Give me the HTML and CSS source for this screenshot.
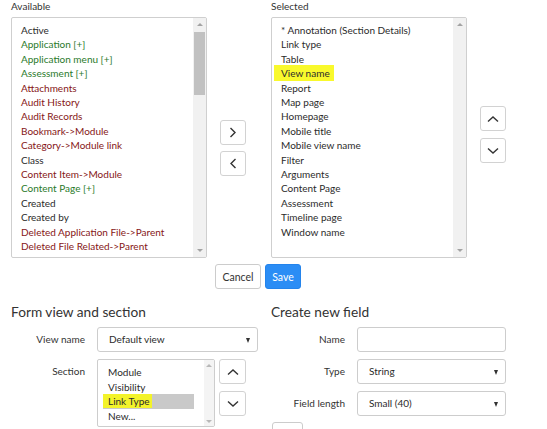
FILE: index.html
```html
<!DOCTYPE html>
<html lang="en">
<head>
<meta charset="utf-8">
<title>Form layout</title>
<link rel="stylesheet" href="styles.css">
</head>
<body>
<div class="page">
  <div class="picker">
    <div class="col">
      <div class="col-label">Available</div>
      <div class="listbox">
        <div class="list-items">
          <div class="item">Active</div>
          <div class="item ref">Application [+]</div>
          <div class="item ref">Application menu [+]</div>
          <div class="item ref">Assessment [+]</div>
          <div class="item rel">Attachments</div>
          <div class="item rel">Audit History</div>
          <div class="item rel">Audit Records</div>
          <div class="item rel">Bookmark-&gt;Module</div>
          <div class="item rel">Category-&gt;Module link</div>
          <div class="item">Class</div>
          <div class="item rel">Content Item-&gt;Module</div>
          <div class="item ref">Content Page [+]</div>
          <div class="item">Created</div>
          <div class="item">Created by</div>
          <div class="item rel">Deleted Application File-&gt;Parent</div>
          <div class="item rel">Deleted File Related-&gt;Parent</div>
        </div>
        <div class="scrollbar">
          <span class="sb-up"></span>
          <span class="sb-thumb"></span>
          <span class="sb-space"></span>
          <span class="sb-down"></span>
        </div>
      </div>
    </div>

    <div class="move-btns">
      <button class="btn-icon" aria-label="Add">
        <svg width="8" height="11" viewBox="0 0 8 11"><polyline points="1.5,1 6,5.5 1.5,10" fill="none" stroke="#333" stroke-width="1.4"/></svg>
      </button>
      <button class="btn-icon" aria-label="Remove">
        <svg width="8" height="11" viewBox="0 0 8 11"><polyline points="6.5,1 2,5.5 6.5,10" fill="none" stroke="#333" stroke-width="1.4"/></svg>
      </button>
    </div>

    <div class="col">
      <div class="col-label">Selected</div>
      <div class="listbox">
        <div class="list-items">
          <div class="item">* Annotation (Section Details)</div>
          <div class="item">Link type</div>
          <div class="item">Table</div>
          <div class="item"><span class="mark">View name</span></div>
          <div class="item">Report</div>
          <div class="item">Map page</div>
          <div class="item">Homepage</div>
          <div class="item">Mobile title</div>
          <div class="item">Mobile view name</div>
          <div class="item">Filter</div>
          <div class="item">Arguments</div>
          <div class="item">Content Page</div>
          <div class="item">Assessment</div>
          <div class="item">Timeline page</div>
          <div class="item">Window name</div>
        </div>
        <div class="scrollbar">
          <span class="sb-up"></span>
          <span class="sb-space"></span>
          <span class="sb-down"></span>
        </div>
      </div>
    </div>

    <div class="order-btns">
      <button class="btn-icon" aria-label="Move up">
        <svg width="12" height="8" viewBox="0 0 12 8"><polyline points="1,6.5 6,2 11,6.5" fill="none" stroke="#333" stroke-width="1.4"/></svg>
      </button>
      <button class="btn-icon" aria-label="Move down">
        <svg width="12" height="8" viewBox="0 0 12 8"><polyline points="1,1.5 6,6 11,1.5" fill="none" stroke="#333" stroke-width="1.4"/></svg>
      </button>
    </div>
  </div>

  <div class="actions">
    <button class="btn btn-cancel">Cancel</button>
    <button class="btn btn-save">Save</button>
  </div>

  <div class="forms">
    <section class="form-col left">
      <h2 class="form-title">Form view and section</h2>
      <div class="form-grid">
        <div class="form-label">View name</div>
        <div class="select wide">Default view</div>

        <div class="form-label">Section</div>
        <div class="section-group">
          <div class="mini-list">
            <div class="mini-items">
              <div class="opt">Module</div>
              <div class="opt">Visibility</div>
              <div class="opt sel"><span class="mark2">Link Type</span></div>
              <div class="opt">New...</div>
            </div>
            <div class="scrollbar small">
              <span class="sb-up"></span>
              <span class="sb-space"></span>
              <span class="sb-down"></span>
            </div>
          </div>
          <div class="mini-btns">
            <button class="btn-icon tall" aria-label="Section up">
              <svg width="12" height="8" viewBox="0 0 12 8"><polyline points="1,6.5 6,2 11,6.5" fill="none" stroke="#333" stroke-width="1.4"/></svg>
            </button>
            <button class="btn-icon tall" aria-label="Section down">
              <svg width="12" height="8" viewBox="0 0 12 8"><polyline points="1,1.5 6,6 11,1.5" fill="none" stroke="#333" stroke-width="1.4"/></svg>
            </button>
          </div>
        </div>
      </div>
    </section>

    <section class="form-col right">
      <h2 class="form-title">Create new field</h2>
      <div class="form-grid">
        <div class="form-label">Name</div>
        <div class="input"></div>

        <div class="form-label">Type</div>
        <div class="select narrow">String</div>

        <div class="form-label">Field length</div>
        <div class="select narrow">Small (40)</div>
      </div>
      <button class="btn btn-add"></button>
    </section>
  </div>
</div>
</body>
</html>
```

FILE: styles.css
```css
html, body {
  margin: 0;
  padding: 0;
  overflow: hidden;
  background: #fff;
}

body {
  width: 547px;
  height: 429px;
  font-family: Lato, "Liberation Sans", sans-serif;
  font-size: 10px;
  color: #2b2b2b;
}

.picker {
  display: flex;
  align-items: flex-start;
  padding-left: 11px;
}

.col-label {
  height: 17px;
  line-height: 13px;
  color: #333;
}

.listbox {
  width: 196px;
  height: 241px;
  box-sizing: border-box;
  border: 1px solid #cfcfcf;
  border-radius: 2px;
  display: flex;
  overflow: hidden;
  background: #fff;
}

.list-items {
  flex: 1;
  padding: 5px 0 0 9px;
  line-height: 14.4px;
  white-space: nowrap;
  overflow: hidden;
}

.item { color: #2b2b2b; }
.item.ref { color: #2a7a2a; }
.item.rel { color: #861616; }

.mark {
  background: #f9f92c;
  margin-left: -7px;
  padding: 2px 4px 2px 7px;
}

.scrollbar {
  width: 13px;
  flex: none;
  background: #f1f1f1;
  display: flex;
  flex-direction: column;
  align-items: center;
}

.sb-up, .sb-down {
  width: 0;
  height: 0;
  border-left: 3px solid transparent;
  border-right: 3px solid transparent;
}

.sb-up {
  margin-top: 5px;
  border-bottom: 3px solid #a3a3a3;
}

.sb-down {
  margin-bottom: 5px;
  border-top: 3px solid #a3a3a3;
}

.sb-thumb {
  width: 11px;
  height: 63px;
  margin-top: 6px;
  background: #c1c1c1;
}

.sb-space { flex: 1; }

.move-btns {
  display: flex;
  flex-direction: column;
  gap: 6px;
  margin: 0 25px 0 13px;
  padding-top: 120px;
}

.order-btns {
  display: flex;
  flex-direction: column;
  gap: 7px;
  margin-left: 13px;
  padding-top: 106px;
}

.btn-icon {
  width: 26px;
  height: 25px;
  box-sizing: border-box;
  border: 1px solid #d2d2d2;
  border-radius: 3px;
  background: #fff;
  padding: 0;
  display: flex;
  align-items: center;
  justify-content: center;
}

.actions {
  display: flex;
  gap: 4px;
  padding-left: 215px;
  margin-top: 6px;
}

.btn {
  height: 25px;
  box-sizing: border-box;
  border-radius: 3px;
  font-family: inherit;
  font-size: 10.5px;
  padding: 0;
}

.btn-cancel {
  width: 46px;
  border: 1px solid #cccccc;
  background: #fff;
  color: #333;
}

.btn-save {
  width: 36px;
  border: 1px solid #2484ec;
  background: #2b8df5;
  color: #fff;
}

.forms {
  display: flex;
  padding-left: 11px;
  margin-top: 13px;
}

.form-col.left { width: 260px; }

.form-title {
  margin: 0 0 5px;
  height: 20px;
  line-height: 20px;
  font-size: 13.7px;
  font-weight: normal;
  color: #333;
}

.form-grid {
  display: grid;
  grid-template-columns: 74px auto;
  column-gap: 12px;
  row-gap: 7px;
  align-items: start;
}

.form-label {
  text-align: right;
  line-height: 25px;
  color: #333;
}

.select, .input {
  height: 25px;
  box-sizing: border-box;
  border: 1px solid #cdcdcd;
  border-radius: 3px;
  background: #fff;
}

.select {
  position: relative;
  padding-left: 11px;
  line-height: 23px;
  color: #2b2b2b;
}

.select::after {
  content: "";
  position: absolute;
  right: 7px;
  top: 10px;
  border-left: 2.5px solid transparent;
  border-right: 2.5px solid transparent;
  border-top: 5px solid #333;
}

.select.wide { width: 161px; }
.select.narrow, .input { width: 149px; }

.section-group {
  display: flex;
  gap: 4px;
}

.mini-list {
  width: 118px;
  height: 68px;
  box-sizing: border-box;
  border: 1px solid #cdcdcd;
  border-radius: 2px;
  display: flex;
  overflow: hidden;
}

.mini-items {
  flex: 1;
  padding: 5px 0 0 5px;
  line-height: 14.5px;
  white-space: nowrap;
  overflow: hidden;
}

.opt {
  width: 91px;
  box-sizing: border-box;
  padding-left: 5px;
}

.opt.sel { background: #c9c9c9; }

.mark2 {
  background: #f3f32a;
  margin-left: -5px;
  padding: 1px 2px 1px 5px;
}

.scrollbar.small {
  width: 10px;
  background: #f4f4f4;
}

.scrollbar.small .sb-up { margin-top: 4px; border-bottom-color: #b8b8b8; }
.scrollbar.small .sb-down { margin-bottom: 3px; border-top-color: #b8b8b8; }

.mini-btns {
  display: flex;
  flex-direction: column;
  gap: 7px;
}

.btn-icon.tall { width: 27px; }

.btn-add {
  display: block;
  width: 31px;
  margin: 6px 0 0 1px;
  border: 1px solid #cccccc;
  background: #fff;
}
```
